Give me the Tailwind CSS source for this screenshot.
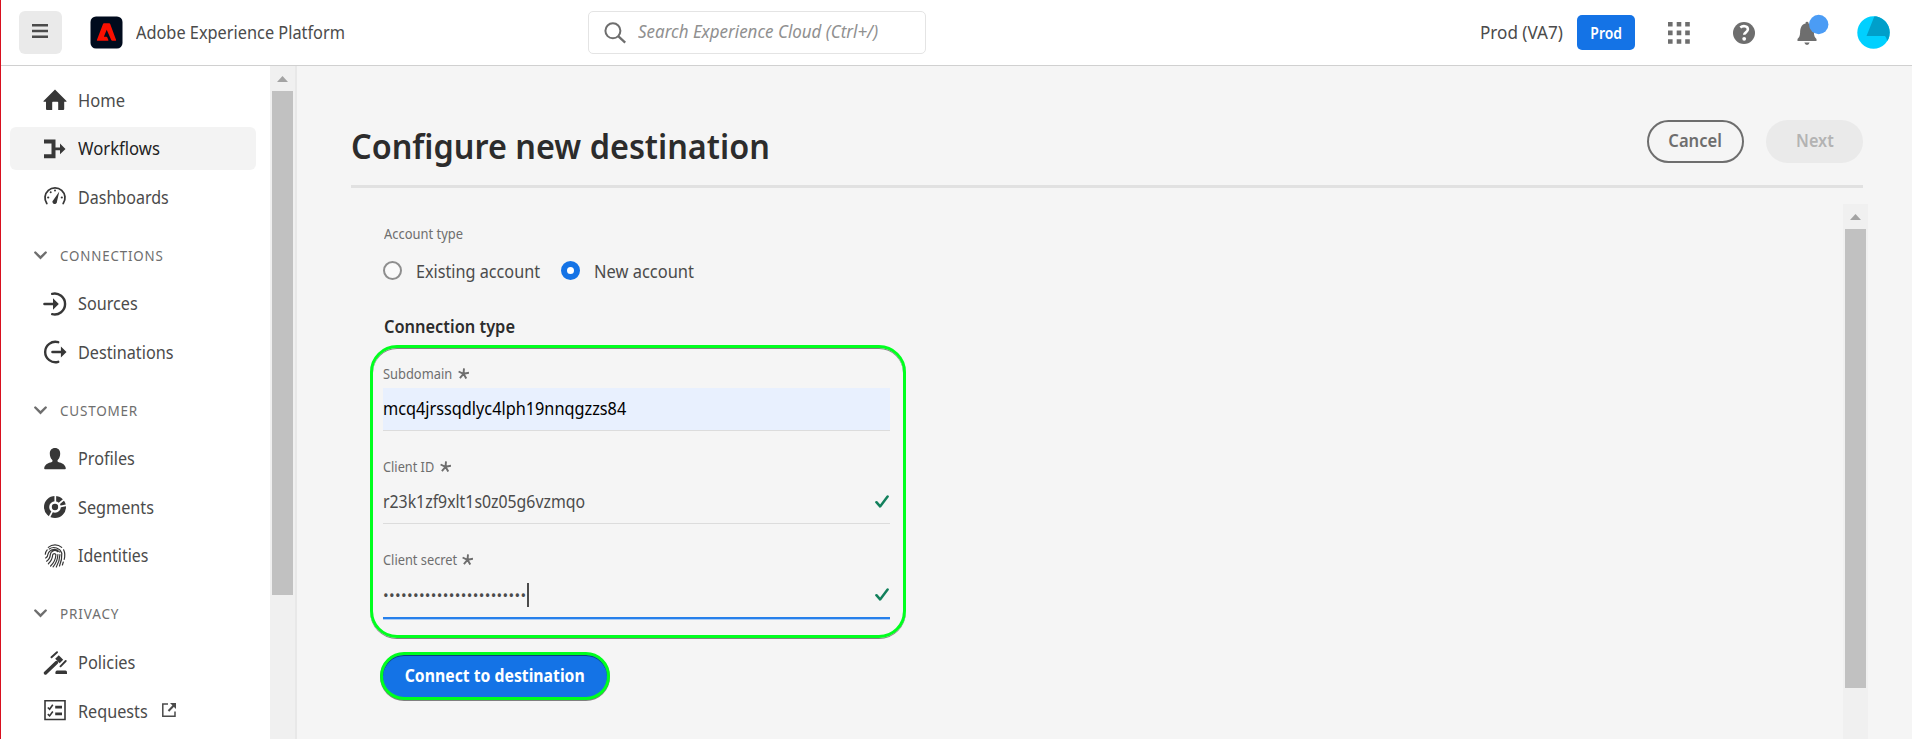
<!DOCTYPE html>
<html lang="en">
<head>
<meta charset="utf-8">
<title>Configure new destination</title>
<script src="https://cdn.jsdelivr.net/npm/@tailwindcss/browser@4"></script>
</head>
<body class="h-[739px] w-[1912px] overflow-hidden font-['Noto_Sans',sans-serif] text-[18px] text-[#4b4b4b] bg-[#f5f5f5]">
<div class="flex h-full flex-col border-l border-[#d8101f]">

  <header class="flex h-[66px] shrink-0 items-center border-b border-[#d0d0d0] bg-white">
    <button class="ml-[18px] flex size-[43px] items-center justify-center rounded-[6px] bg-[#eaeaea] pr-[2px] pb-1">
      <svg class="h-[14px] w-4" viewBox="0 0 16 14" fill="#4b4b4b"><path d="M0 0h16v2.4H0zM0 5.8h16v2.4H0zM0 11.6h16V14H0z"/></svg>
    </button>
    <svg class="ml-[28px] size-[33px]" viewBox="0 0 33 33"><rect x=".5" y=".5" width="32" height="32" rx="5.5" fill="#000b1d"/><path d="M14 7.300h5.200q.7 0 1 .7l5.900 16q.2.7-.5.700h-3.300q-.8 0-1.100-.7l-4.500-10.300-2.800 7h2.600q.5 0 .7.500l1.200 2.900q.3.600-.4.600H7.400q-.8 0-.5-.8L13 8q.3-.7 1-.7z" fill="#fa0f00"/></svg>
    <div class="ml-[13px] w-[452px] whitespace-nowrap"><span class="inline-block origin-left scale-x-[.907]">Adobe Experience Platform</span></div>
    <div class="flex h-[43px] w-[338px] items-center rounded-[5px] border border-[#e4e4e4] bg-white pl-[15px]">
      <svg class="size-[22px]" viewBox="0 0 22 22" fill="none" stroke="#6e6e6e" stroke-width="2"><circle cx="8.900" cy="8.800" r="7.500"/><path d="M14.200 14.200l7 6.400" stroke-width="2.300"/></svg>
      <span class="ml-[12px] inline-block origin-left scale-x-[.941] pb-[2px] whitespace-nowrap text-[#909090] italic">Search Experience Cloud (Ctrl+/)</span>
    </div>
    <div class="ml-[554px] w-[97px] whitespace-nowrap"><span class="inline-block origin-left scale-x-[.95]">Prod (VA7)</span></div>
    <div class="flex h-[35px] w-[58px] items-center justify-center rounded-[5px] bg-[#1473e6] text-[16px] font-semibold text-white"><span class="scale-x-[.87]">Prod</span></div>
    <svg class="ml-[33px] size-[22px]" viewBox="0 0 22 22" fill="#6e6e6e"><path d="M0 0h4.600v4.600H0zM8.700 0h4.600v4.600H8.700zM17.200 0h4.600v4.600h-4.600zM0 8.600h4.600v4.600H0zM8.700 8.600h4.600v4.600H8.700zM17.200 8.600h4.600v4.600h-4.600zM0 17.200h4.600v4.600H0zM8.700 17.200h4.600v4.600H8.700zM17.200 17.200h4.600v4.600h-4.600z"/></svg>
    <svg class="ml-[43px] size-[22px]" viewBox="0 0 22 22"><circle cx="11" cy="11" r="11" fill="#6e6e6e"/><path d="M7.300 5.400C9.500 3.600 14.900 3.500 14.900 7.300c0 3-3.700 3-3.700 5.500" fill="none" stroke="#fff" stroke-width="2.600"/><circle cx="11.200" cy="16.800" r="1.900" fill="#fff"/></svg>
    <svg class="mb-[1px] ml-[42px] h-[36px] w-[32px]" viewBox="0 0 32 36"><path d="M8.500 11.500V9q0-1.300 1.500-1.300T11.500 9v.600c4.500 1.200 5.200 5 5.400 9 .1 3.600.9 5 2.600 6.500V27H.5v-1.900c1.700-1.500 2.500-2.900 2.600-6.500.2-4 .9-7.800 5.400-9z" fill="#6e6e6e"/><path d="M7.400 28.500h5.200q-.5 2.400-2.600 2.400t-2.600-2.400z" fill="#6e6e6e"/><circle cx="21.700" cy="10.500" r="9.700" fill="#4b9cf5"/></svg>
    <svg class="ml-[28px] size-[33px]" viewBox="0 0 33 33"><clipPath id="av"><circle cx="16.500" cy="16.500" r="16.200"/></clipPath><g clip-path="url(#av)"><path fill="#00d0ff" d="M0 0h33v33H0z"/><path fill="#009fca" d="M17.500 0 9.500 20h18.500q1.200 1 2.300 5L33 22V0z"/></g></svg>
  </header>

  <div class="flex min-h-0 flex-1">
    <nav class="flex w-[269px] shrink-0 flex-col gap-[5.500px] bg-white pt-[12.500px] pl-[9px] whitespace-nowrap">
      <a class="flex h-[43px] w-[246px] shrink-0 items-center rounded-[6px] pl-[33px]">
        <svg class="mr-[11px] size-6" viewBox="0 0 24 24" fill="#373737"><path d="M12 1.500 23.500 13q.5.800-.5.800h-1.800V21q0 1-1 1h-5v-7.500q0-.7-.7-.7h-4.600q-.7 0-.7.700V22H4q-1 0-1-1v-7.200H1q-1 0-.5-.8z"/></svg>
        <span class="inline-block origin-left scale-x-[.918]">Home</span></a>
      <a class="flex h-[43px] w-[246px] shrink-0 items-center rounded-[6px] bg-[#f3f3f3] pl-[33px] text-[#222]">
        <svg class="mr-[11px] size-6" viewBox="0 0 24 24" fill="#373737"><path d="M1 2.500h11.500v8H17V6.500l5.500 5.400L17 17.300v-4h-4.500v8H1v-4h7.500V6.500H1z"/></svg>
        <span class="inline-block origin-left scale-x-[.926]">Workflows</span></a>
      <a class="flex h-[43px] w-[246px] shrink-0 items-center rounded-[6px] pl-[33px]">
        <svg class="mr-[11px] size-6" viewBox="0 0 24 24" fill="#373737"><path d="M3.800 18.500A10 10 0 1 1 20.200 18.500" fill="none" stroke="#373737" stroke-width="1.800" stroke-linecap="round"/><path d="M16.300 6.500 14 16.500a2.300 2.300 0 1 1-3.600-1.600z"/><circle cx="12" cy="5.600" r="1"/><circle cx="7.700" cy="7.300" r="1"/><circle cx="5.200" cy="12.500" r="1.100"/><circle cx="18.800" cy="12.500" r="1.100"/></svg>
        <span class="inline-block origin-left scale-x-[.892]">Dashboards</span></a>

      <div class="mt-[9.700px] flex h-[43px] shrink-0 items-center pl-[24px] text-[14px] text-[#6e6e6e]">
        <svg class="mr-[13px] h-[9px] w-[13px]" viewBox="0 0 13 9" fill="none" stroke="#6e6e6e" stroke-width="2.400" stroke-linecap="round"><path d="M1.300 1.500 6.500 6.700l5.200-5.200"/></svg>
        <span class="inline-block origin-left scale-x-[.95] tracking-[.9px]">CONNECTIONS</span></div>
      <a class="flex h-[43px] w-[246px] shrink-0 items-center rounded-[6px] pl-[33px]">
        <svg class="mr-[11px] size-6" viewBox="0 0 24 24"><path d="M9.200 1.900A10.400 10.400 0 1 1 9.200 22.100" fill="none" stroke="#373737" stroke-width="2.400" stroke-linecap="round"/><path d="M1.500 10.700H10V6.200l5.800 5.800L10 17.800v-4.500H1.500q-1.300 0-1.300-1.300t1.300-1.300z" fill="#373737"/></svg>
        <span class="inline-block origin-left scale-x-[.9]">Sources</span></a>
      <a class="flex h-[43px] w-[246px] shrink-0 items-center rounded-[6px] pl-[33px]">
        <svg class="mr-[11px] size-6" viewBox="0 0 24 24"><path d="M15.200 2.200A10.200 10.200 0 1 0 15.200 21.800" fill="none" stroke="#373737" stroke-width="2.400" stroke-linecap="round"/><path d="M9.500 10.700h8.400V6.600l5.600 5.400-5.600 5.400v-4.100H9.500q-1.300 0-1.300-1.300t1.300-1.300z" fill="#373737"/></svg>
        <span class="inline-block origin-left scale-x-[.9]">Destinations</span></a>

      <div class="mt-[9.700px] flex h-[43px] shrink-0 items-center pl-[24px] text-[14px] text-[#6e6e6e]">
        <svg class="mr-[13px] h-[9px] w-[13px]" viewBox="0 0 13 9" fill="none" stroke="#6e6e6e" stroke-width="2.400" stroke-linecap="round"><path d="M1.300 1.500 6.500 6.700l5.200-5.200"/></svg>
        <span class="inline-block origin-left scale-x-[.965] tracking-[.8px]">CUSTOMER</span></div>
      <a class="flex h-[43px] w-[246px] shrink-0 items-center rounded-[6px] pl-[33px]">
        <svg class="mr-[11px] size-6" viewBox="0 0 24 24" fill="#373737"><path d="M12 1c3.400 0 5.200 2.200 5.200 5.800 0 2.600-1 4.700-2.300 6-.6.700-.6 1.800.2 2.300 3.800.9 7.400 2.600 7.700 6.400q0 .8-.8.800H2q-.8 0-.8-.8c.3-3.800 3.900-5.500 7.700-6.400.8-.5.8-1.600.2-2.300-1.300-1.300-2.300-3.400-2.300-6C6.800 3.200 8.600 1 12 1z"/></svg>
        <span class="inline-block origin-left scale-x-[.9]">Profiles</span></a>
      <a class="flex h-[43px] w-[246px] shrink-0 items-center rounded-[6px] pl-[33px]">
        <svg class="mr-[11px] size-6" viewBox="0 0 24 24"><circle cx="12" cy="12" r="3.200" fill="#373737"/><circle cx="12" cy="12" r="8.400" fill="none" stroke="#373737" stroke-width="5.200"/><path d="M12.300 7.500V0M15 9.500 22 3.600M15.500 11.800l9-1.800M9.800 15.300 5.500 24" stroke="#fff" stroke-width="1.700"/></svg>
        <span class="inline-block origin-left scale-x-[.9]">Segments</span></a>
      <a class="flex h-[43px] w-[246px] shrink-0 items-center rounded-[6px] pl-[33px]">
        <svg class="mr-[11px] size-6" viewBox="0 0 24 24" fill="none" stroke="#373737" stroke-width="1.200" stroke-linecap="round"><path d="M5.300 3.400A10 10 0 0 1 18.700 3.400M20.600 5.800q2 4 .6 9.500M2.300 10.200q.3-2.600 1.900-4.300M6.200 5A8.300 8.300 0 0 1 18.800 9.200q.4 6-2.300 12.800M2.700 14q2.200-1.400 2.300-3.900A6.600 6.600 0 0 1 16.500 8M16.900 10.700q-.2 6.300-3.600 12.300M3.600 17.200q3.500-2.500 3.700-6.600a4.400 4.400 0 0 1 7.300-3M14.900 10.500q-.3 7-4.800 12.300M5.400 19.800q4-3.700 4.300-9a1.700 1.700 0 0 1 3.200 0q-.4 6.700-5.300 11.200M20.300 18l-.9 3"/></svg>
        <span class="inline-block origin-left scale-x-[.885]">Identities</span></a>

      <div class="mt-[9.700px] flex h-[43px] shrink-0 items-center pb-[1px] pl-[24px] text-[14px] text-[#6e6e6e]">
        <svg class="mr-[13px] h-[9px] w-[13px]" viewBox="0 0 13 9" fill="none" stroke="#6e6e6e" stroke-width="2.400" stroke-linecap="round"><path d="M1.300 1.500 6.500 6.700l5.200-5.200"/></svg>
        <span class="inline-block origin-left scale-x-[.965] tracking-[.9px]">PRIVACY</span></div>
      <a class="flex h-[43px] w-[246px] shrink-0 items-center rounded-[6px] pl-[33px]">
        <svg class="mr-[11px] size-6" viewBox="0 0 24 24" fill="#373737"><path d="M12.200 7.700 15.800 4.200 20.200 8.700 16.700 12.200z"/><path d="M8.500 6.300 14 1.200M17.500 15.300 22.700 10" stroke="#373737" stroke-width="1.900" stroke-linecap="round"/><path d="M2.500 22 13.500 11.500" stroke="#373737" stroke-width="3.400" stroke-linecap="round"/><path d="M14 19.500h8.500q1.500 0 1.500 1.700V23H12.500v-1.800q0-1.700 1.500-1.700z"/></svg>
        <span class="inline-block origin-left scale-x-[.91]">Policies</span></a>
      <a class="flex h-[43px] w-[246px] shrink-0 items-center rounded-[6px] pl-[33px]">
        <svg class="mr-[11px] size-6" viewBox="0 0 24 24" fill="none" stroke="#373737"><path d="M2 1.700h20v18.800H2z" stroke-width="1.600"/><path d="M4.800 8.500l1.800 1.700 3.200-4.400M4.800 15.200l1.800 1.700 3.200-4.400" stroke-width="1.600"/><path d="M12.200 8.200h6.800M12.200 14.800h6.800" stroke-width="2.700"/></svg>
        <span class="inline-block w-[84px] origin-left scale-x-[.9]">Requests</span>
        <svg class="mb-[2px] size-[14px]" viewBox="0 0 14 14" fill="none" stroke="#4b4b4b"><path d="M6 1H.8v12.200H13V8.500" stroke-width="1.500"/><path d="M6.500 8 11.500 2.800" stroke-width="2"/><path d="M8 0h6v6z" fill="#4b4b4b" stroke="none"/></svg></a>
    </nav>
    <div class="flex w-[27px] shrink-0 flex-col items-start border-r-2 border-[#e8e8e8] bg-[#f0f0f0] pl-[2px]">
      <svg class="mt-[10px] ml-[5px] h-[6px] w-[11px]" viewBox="0 0 11 6" fill="#a3a3a3"><path d="M5.500 0 11 6H0z"/></svg>
      <div class="mt-[9px] h-[504px] w-[21px] bg-[#c1c1c1]"></div>
    </div>

    <main class="flex flex-1 flex-col pl-[54px]">
      <div class="flex h-[122px] w-[1512px] shrink-0 border-b-[3px] border-[#e1e1e1]">
        <h1 class="flex h-[159px] flex-1 items-center text-[35px] leading-none font-semibold whitespace-nowrap text-[#2c2c2c]"><span class="inline-block origin-left scale-x-[.926]">Configure new destination</span></h1>
        <div class="mt-[54px] flex h-[43px] gap-[22px] font-semibold">
          <button class="flex w-[97px] items-center justify-center rounded-full border-2 border-[#6e6e6e] pb-[2px] text-[#6e6e6e]"><span class="scale-x-[.92]">Cancel</span></button>
          <button class="flex w-[97px] items-center justify-center rounded-full bg-[#eaeaea] pb-[2px] text-[#b3b3b3]"><span class="scale-x-[.9]">Next</span></button>
        </div>
      </div>

      <div class="flex flex-1 pt-[16px]">
        <section class="flex w-[1492px] flex-col pl-[19px] whitespace-nowrap">
          <div class="mt-[19px] ml-[14px] flex h-[20px] items-center text-[14px] text-[#6e6e6e]"><span class="inline-block origin-left scale-x-[.923]">Account type</span></div>
          <div class="mt-[18px] ml-[13px] flex h-[20px] items-center">
            <span class="mb-[1px] size-[19px] rounded-full border-2 border-[#8e8e8e] bg-[#fafafa]"></span>
            <span class="ml-[14px] inline-block w-[145px] origin-left scale-x-[.9]">Existing account</span>
            <span class="mb-[1px] size-[19px] rounded-full border-[6px] border-[#1473e6] bg-white"></span>
            <span class="ml-[14px] inline-block origin-left scale-x-[.914]">New account</span>
          </div>
          <div class="mt-[35px] ml-[14px] flex h-[20px] items-center font-semibold text-[#2c2c2c]"><span class="inline-block origin-left scale-x-[.911]">Connection type</span></div>

          <div class="mt-[9px] flex h-[293px] w-[536px] shrink-0 flex-col rounded-[27px] border-[3px] border-[#00ff1e] pl-[10px] shadow-[0_1px_0_#808080,inset_0_1px_0_#808080]">
            <label class="mt-[15px] flex h-[20px] items-center text-[14px] text-[#6e6e6e]"><span class="inline-block w-[75px] origin-left scale-x-[.92]">Subdomain</span>
              <svg class="size-[11px]" viewBox="0 0 11 11" stroke="#6e6e6e" stroke-width="1.900" fill="none"><path d="M5.500 5.800 6 .3M5.500 5.800 11 4.800M5.500 5.800l2.800 4.800M5.500 5.800l-3.600 4.400M5.500 5.800.6 3.500"/></svg></label>
            <div class="mt-[5px] flex h-[43px] w-[507px] items-center border-b border-[#dcdcdc] bg-[#e8f0fe] pb-[2px] text-black"><span class="inline-block origin-left scale-x-[.904]">mcq4jrssqdlyc4lph19nnqgzzs84</span></div>
            <label class="mt-[25px] flex h-[20px] items-center text-[14px] text-[#6e6e6e]"><span class="inline-block w-[57px] origin-left scale-x-[.91]">Client ID</span>
              <svg class="size-[11px]" viewBox="0 0 11 11" stroke="#6e6e6e" stroke-width="1.900" fill="none"><path d="M5.500 5.800 6 .3M5.500 5.800 11 4.800M5.500 5.800l2.800 4.800M5.500 5.800l-3.600 4.400M5.500 5.800.6 3.500"/></svg></label>
            <div class="mt-[5px] flex h-[43px] w-[507px] items-center justify-between border-b border-[#dcdcdc] pb-[2px]"><span class="inline-block origin-left scale-x-[.88]">r23k1zf9xlt1s0z05g6vzmqo</span>
              <svg class="mr-px h-[13px] w-[14px]" viewBox="0 0 14 13" fill="none" stroke="#12805c" stroke-width="2.500" stroke-linecap="round" stroke-linejoin="round"><path d="M1.400 7.200l3.700 4.200L12.600 1.600"/></svg></div>
            <label class="mt-[25px] flex h-[20px] items-center text-[14px] text-[#6e6e6e]"><span class="inline-block w-[79px] origin-left scale-x-[.915]">Client secret</span>
              <svg class="size-[11px]" viewBox="0 0 11 11" stroke="#6e6e6e" stroke-width="1.900" fill="none"><path d="M5.500 5.800 6 .3M5.500 5.800 11 4.800M5.500 5.800l2.800 4.800M5.500 5.800l-3.600 4.400M5.500 5.800.6 3.500"/></svg></label>
            <div class="mt-[4px] flex h-[46px] w-[507px] items-center border-b-2 border-[#2680eb] pb-[1px] shadow-[0_1px_0_#a9cbf5]"><span class="mt-[2px] inline-block w-[144px] text-[15px] tracking-[.340px]">••••••••••••••••••••••••</span><i class="h-[24px] w-[2px] bg-[#4b4b4b]"></i>
              <svg class="mr-px ml-auto h-[13px] w-[14px]" viewBox="0 0 14 13" fill="none" stroke="#12805c" stroke-width="2.500" stroke-linecap="round" stroke-linejoin="round"><path d="M1.400 7.200l3.700 4.200L12.600 1.600"/></svg></div>
          </div>

          <button class="mt-[14px] ml-[10px] flex h-[48px] w-[230px] shrink-0 items-center justify-center rounded-full border-[3px] border-[#00ff1e] bg-[#1473e6] pb-[1px] font-bold text-white shadow-[0_1px_0_#808080,inset_0_1px_0_#0d3f80]"><span class="scale-x-[.876]">Connect to destination</span></button>
        </section>
        <div class="flex w-[25px] flex-col bg-[#f0f0f0] pl-[2px]">
          <svg class="mt-[10px] ml-[5px] h-[6px] w-[11px]" viewBox="0 0 11 6" fill="#a3a3a3"><path d="M5.500 0 11 6H0z"/></svg>
          <div class="mt-[9px] h-[459px] w-[21px] bg-[#c1c1c1]"></div>
        </div>
      </div>
    </main>
  </div>
</div>
</body>
</html>
